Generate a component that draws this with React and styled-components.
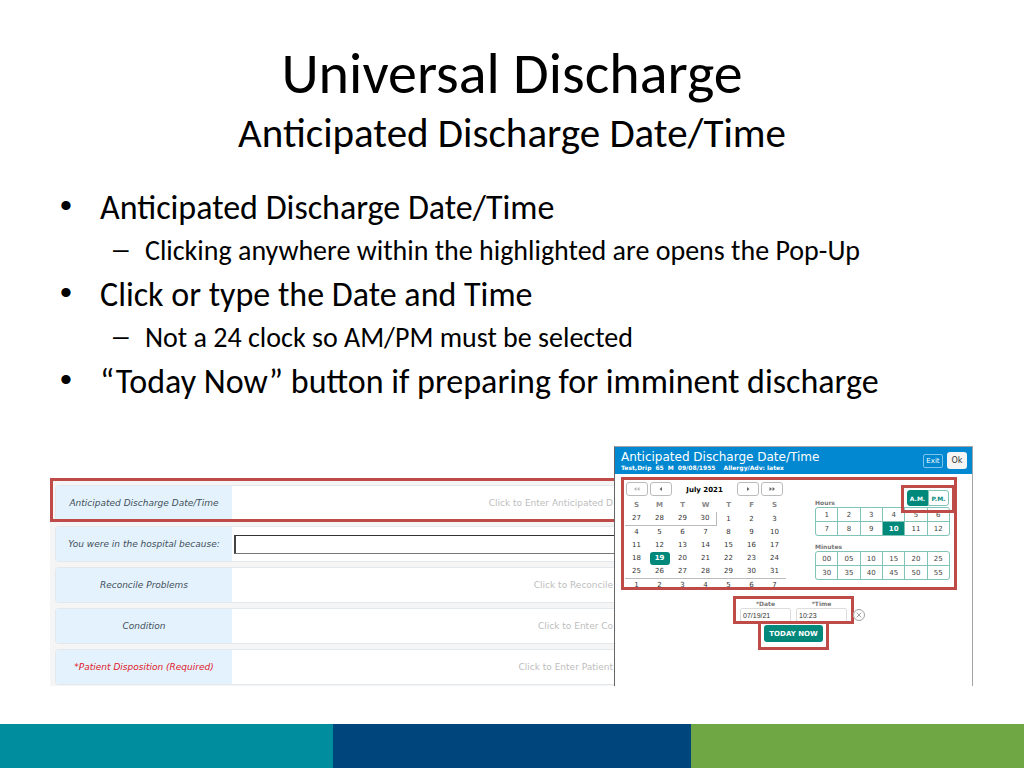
import React from "react";
import styled, { createGlobalStyle, css } from "styled-components";

const GlobalStyle = createGlobalStyle`
  * {
    box-sizing: border-box;
  }

  body {
    margin: 0;
    background: #fff;
    color: #000;
    font-family: Carlito, Lato, sans-serif;
  }

  button, input {
    font-family: inherit;
    margin: 0;
  }
`;

const bullets = [
  {
    text: "Anticipated Discharge Date/Time",
    sub: "Clicking anywhere within the highlighted are opens the Pop-Up",
  },
  {
    text: "Click or type the Date and Time",
    sub: "Not a 24 clock so AM/PM must be selected",
  },
  { text: "“Today Now” button if preparing for imminent discharge" },
];

const weekDays = ["S", "M", "T", "W", "T", "F", "S"];

const weeks = [
  [27, 28, 29, 30, 1, 2, 3],
  [4, 5, 6, 7, 8, 9, 10],
  [11, 12, 13, 14, 15, 16, 17],
  [18, 19, 20, 21, 22, 23, 24],
  [25, 26, 27, 28, 29, 30, 31],
  [1, 2, 3, 4, 5, 6, 7],
];

const hours = ["1", "2", "3", "4", "5", "6", "7", "8", "9", "10", "11", "12"];
const minutes = ["00", "05", "10", "15", "20", "25", "30", "35", "40", "45", "50", "55"];

const App = () => {
  return (
    <Slide>
      <GlobalStyle />
      <Heading>
        <Title>Universal Discharge</Title>
        <Subtitle>Anticipated Discharge Date/Time</Subtitle>
      </Heading>
      <Bullets>
        {bullets.map((b) => (
          <li key={b.text}>
            <Point>
              <Marker>•</Marker>
              {b.text}
            </Point>
            {b.sub && (
              <SubPoint>
                <Marker>–</Marker>
                {b.sub}
              </SubPoint>
            )}
          </li>
        ))}
      </Bullets>
      <Figure>
        <DischargeForm />
        <PopUp />
      </Figure>
      <Footer>
        <Band $color="#008e9e" />
        <Band $color="#00457c" />
        <Band $color="#6ea743" />
      </Footer>
    </Slide>
  );
};

const DischargeForm = () => (
  <Form>
    <FormRow $marked>
      <RowLabel>Anticipated Discharge Date/Time</RowLabel>
      <RowValue>Click to Enter Anticipated D</RowValue>
    </FormRow>
    <FormRow>
      <RowLabel as="label" htmlFor="reason">
        You were in the hospital because:
      </RowLabel>
      <RowInput id="reason" type="text" />
    </FormRow>
    <FormRow>
      <RowLabel>Reconcile Problems</RowLabel>
      <RowValue>Click to Reconcile</RowValue>
    </FormRow>
    <FormRow>
      <RowLabel>Condition</RowLabel>
      <RowValue>Click to Enter Co</RowValue>
    </FormRow>
    <FormRow>
      <RowLabel $required>*Patient Disposition (Required)</RowLabel>
      <RowValue>Click to Enter Patient</RowValue>
    </FormRow>
  </Form>
);

const PopUp = () => (
  <Dialog>
    <DialogHeader>
      <div>
        <DialogTitle>Anticipated Discharge Date/Time</DialogTitle>
        <Patient>
          <span>Test,Drip</span>
          <span>65</span>
          <span>M</span>
          <span>09/08/1955</span>
          <Allergy>Allergy/Adv: latex</Allergy>
        </Patient>
      </div>
      <HeaderButtons>
        <ExitButton type="button">Exit</ExitButton>
        <OkButton type="button">Ok</OkButton>
      </HeaderButtons>
    </DialogHeader>
    <PickerFrame>
      <div>
        <MonthBar>
          <NavButton type="button" aria-label="Previous year">
            <Chevron double left />
          </NavButton>
          <NavButton type="button" aria-label="Previous month">
            <Chevron left />
          </NavButton>
          <Month>July 2021</Month>
          <NavButton type="button" aria-label="Next month">
            <Chevron />
          </NavButton>
          <NavButton type="button" aria-label="Next year">
            <Chevron double />
          </NavButton>
        </MonthBar>
        <Calendar>
          <thead>
            <tr>
              {weekDays.map((d, i) => (
                <th key={i}>{d}</th>
              ))}
            </tr>
          </thead>
          <tbody>
            {weeks.map((week, w) => (
              <tr key={w}>
                {week.map((d, i) => (
                  <Day
                    key={i}
                    $under={w === 0 && i < 4}
                    $side={w === 0 && i === 3}
                    $over={w === 5}
                  >
                    <DayButton type="button" $selected={w === 3 && i === 1}>
                      {d}
                    </DayButton>
                  </Day>
                ))}
              </tr>
            ))}
          </tbody>
        </Calendar>
      </div>
      <Clock>
        <ClockLabel>Hours</ClockLabel>
        <ClockGrid>
          {hours.map((h) => (
            <ClockCell type="button" key={h} $selected={h === "10"}>
              {h}
            </ClockCell>
          ))}
        </ClockGrid>
        <ClockLabel>Minutes</ClockLabel>
        <ClockGrid>
          {minutes.map((m) => (
            <ClockCell type="button" key={m}>
              {m}
            </ClockCell>
          ))}
        </ClockGrid>
      </Clock>
      <MeridiemFrame>
        <Meridiem type="button" $selected>
          A.M.
        </Meridiem>
        <Meridiem type="button">P.M.</Meridiem>
      </MeridiemFrame>
    </PickerFrame>
    <Entry>
      <EntryFrame>
        <Field>
          <label htmlFor="date">*Date</label>
          <input id="date" type="text" defaultValue="07/19/21" />
        </Field>
        <Field>
          <label htmlFor="time">*Time</label>
          <input id="time" type="text" defaultValue="10:23" />
        </Field>
        <ClearButton type="button" aria-label="Clear">
          <svg width="12" height="12" viewBox="0 0 12 12" fill="none" stroke="#888">
            <circle cx="6" cy="6" r="5.5" strokeWidth="0.8" />
            <path d="M3.7 3.7 L8.3 8.3 M8.3 3.7 L3.7 8.3" strokeWidth="0.8" />
          </svg>
        </ClearButton>
      </EntryFrame>
      <TodayFrame>
        <TodayButton type="button">TODAY NOW</TodayButton>
      </TodayFrame>
    </Entry>
  </Dialog>
);

const Chevron = ({ double, left }) => (
  <svg width="8" height="6" viewBox="0 0 8 6" fill={double && left ? "#b5b5b5" : "#666"}>
    <g transform={left ? "matrix(-1 0 0 1 8 0)" : undefined}>
      {double ? (
        <path d="M1.5 1 L4 3 L1.5 5 Z M4.5 1 L7 3 L4.5 5 Z" />
      ) : (
        <path d="M3 1 L5.5 3 L3 5 Z" />
      )}
    </g>
  </svg>
);

const red = "#bf4b48";
const teal = "#00897b";

const Slide = styled.main`
  min-height: 100vh;
  display: flex;
  flex-direction: column;
`;

const Heading = styled.header`
  padding-top: 40px;
  text-align: center;
`;

const Title = styled.h1`
  margin: 0;
  font-size: 58px;
  font-weight: 400;
  line-height: 68px;
`;

const Subtitle = styled.h2`
  margin: 0;
  font-size: 41px;
  font-weight: 400;
  line-height: 50px;
`;

const Bullets = styled.ul`
  margin: 28px 0 0;
  padding: 0 60px;
  list-style: none;
`;

const Marker = styled.span`
  font-family: "Liberation Sans", sans-serif;
  line-height: 38px;
`;

const Point = styled.div`
  display: grid;
  grid-template-columns: 40px 1fr;
  font-size: 34px;
  line-height: 44px;
`;

const SubPoint = styled.div`
  display: grid;
  grid-template-columns: 32px 1fr;
  padding: 0 0 2px 53px;
  font-size: 28px;
  line-height: 41px;
`;

const Figure = styled.section`
  display: grid;
  grid-template-columns: 11fr 7fr;
  align-items: end;
  margin-top: auto;
  padding: 0 51px 38px 50px;
  font-family: "DejaVu Sans", sans-serif;
`;

const Form = styled.form`
  display: flex;
  flex-direction: column;
  gap: 5px;
  padding: 7px 0 1px 5px;
  overflow: hidden;
  background: #f5f5f5;
`;

const FormRow = styled.div`
  position: relative;
  display: flex;
  align-items: center;
  height: 36px;
  background: #fff;
  border: 1px solid #e3e8ec;
  border-right: 0;
  border-radius: 4px 0 0 4px;

  ${({ $marked }) =>
    $marked &&
    css`
      &::after {
        content: "";
        position: absolute;
        inset: -8px 0 -2px -6px;
        border: 3px solid ${red};
        border-right: 0;
      }
    `}
`;

const RowLabel = styled.span`
  display: flex;
  align-items: center;
  justify-content: center;
  flex: 0 0 176px;
  align-self: stretch;
  background: #e3f2fd;
  color: ${({ $required }) => ($required ? "#e0202c" : "#44505a")};
  font-size: 9px;
  font-style: italic;
  white-space: nowrap;
`;

const RowValue = styled.span`
  flex: 1;
  padding-right: 1px;
  color: #bdbdbd;
  font-size: 9px;
  text-align: right;
  white-space: nowrap;
`;

const RowInput = styled.input`
  flex: 1;
  min-width: 0;
  height: 19px;
  margin-left: 2px;
  border: 1px solid #777;
  border-left: 2px solid #444;
  border-top-color: #333;
  border-right: 0;
  border-radius: 0;
  background: #fff;
`;

const Dialog = styled.section`
  height: 240px;
  background: #fff;
  border: 1px solid #a5a5a5;
  border-left-color: #666;
  border-bottom: 0;
`;

const DialogHeader = styled.header`
  display: flex;
  align-items: center;
  justify-content: space-between;
  height: 27px;
  padding: 0 5px 0 6px;
  background: #0288d1;
  color: #fff;
`;

const DialogTitle = styled.h3`
  margin: 0;
  font-size: 12px;
  font-weight: 400;
  line-height: 14px;
`;

const Patient = styled.div`
  display: flex;
  gap: 4px;
  font-size: 6px;
  font-weight: 700;
  line-height: 8px;
`;

const Allergy = styled.span`
  margin-left: 4px;
`;

const HeaderButtons = styled.div`
  display: flex;
  gap: 4px;
  align-items: center;
`;

const ExitButton = styled.button`
  width: 20px;
  height: 14px;
  padding: 0;
  border: 1px solid #7cc4ee;
  border-radius: 2px;
  background: transparent;
  color: #fff;
  font-size: 7px;
`;

const OkButton = styled.button`
  width: 20px;
  height: 17px;
  padding: 0;
  border: 0;
  border-radius: 3px;
  background: #f5f5f5;
  color: #333;
  font-size: 8px;
`;

const PickerFrame = styled.div`
  position: relative;
  display: flex;
  justify-content: space-between;
  height: 113px;
  margin: 3px 15px 0 6px;
  padding: 2px 4px 0 1px;
  border: 3px solid ${red};
`;

const MonthBar = styled.div`
  display: flex;
  gap: 2px;
  padding: 0 3px 0 1px;
`;

const NavButton = styled.button`
  display: flex;
  align-items: center;
  justify-content: center;
  width: 22px;
  height: 14px;
  padding: 0;
  border: 1px solid #bbb;
  border-radius: 3px;
  background: #fff;
`;

const Month = styled.div`
  flex: 1;
  font-size: 7px;
  font-weight: 700;
  line-height: 16px;
  text-align: center;
`;

const Calendar = styled.table`
  width: 161px;
  border-collapse: separate;
  border-spacing: 0;
  table-layout: fixed;
  font-size: 7px;

  th {
    height: 14px;
    padding: 0;
    color: #888;
  }
`;

const Day = styled.td`
  height: 13px;
  padding: 0;
  line-height: 12px;
  text-align: center;
  border: 0 solid #bbb;
  border-bottom-width: ${({ $under }) => ($under ? 1 : 0)}px;
  border-right-width: ${({ $side }) => ($side ? 1 : 0)}px;
  border-top-width: ${({ $over }) => ($over ? 1 : 0)}px;
`;

const DayButton = styled.button`
  width: 20px;
  height: 13px;
  padding: 0;
  border: 0;
  border-radius: 3px;
  background: ${({ $selected }) => ($selected ? teal : "transparent")};
  color: ${({ $selected }) => ($selected ? "#fff" : "#333")};
  font-size: 7px;
  font-weight: ${({ $selected }) => ($selected ? 700 : 400)};
  line-height: 13px;
  vertical-align: top;
`;

const Clock = styled.div`
  width: 135px;
  padding-top: 16px;
`;

const ClockLabel = styled.div`
  color: #777;
  font-size: 6px;
  font-weight: 700;
  line-height: 9px;
`;

const ClockGrid = styled.div`
  display: grid;
  grid-template-columns: repeat(6, 1fr);
  gap: 1px;
  margin-bottom: 6px;
  border: 1px solid #80c4b7;
  border-radius: 3px;
  background: #80c4b7;
  overflow: hidden;
`;

const ClockCell = styled.button`
  height: 13px;
  padding: 0;
  border: 0;
  background: ${({ $selected }) => ($selected ? teal : "#fff")};
  color: ${({ $selected }) => ($selected ? "#fff" : "#444")};
  font-size: 7px;
  font-weight: ${({ $selected }) => ($selected ? 700 : 400)};
`;

const MeridiemFrame = styled.div`
  position: absolute;
  top: 5px;
  right: -1px;
  display: flex;
  height: 28px;
  padding: 2px 3px 7px 3px;
  border: 3px solid ${red};
`;

const Meridiem = styled.button`
  width: 21px;
  height: 16px;
  padding: 0;
  border: 1px solid ${({ $selected }) => ($selected ? teal : "#80c4b7")};
  border-radius: ${({ $selected }) => ($selected ? "3px 0 0 3px" : "0 3px 3px 0")};
  background: ${({ $selected }) => ($selected ? teal : "#fff")};
  color: ${({ $selected }) => ($selected ? "#fff" : teal)};
  font-size: 6px;
  font-weight: 700;
`;

const Entry = styled.div`
  display: flex;
  flex-direction: column;
  align-items: center;
  margin-top: 6px;
`;

const EntryFrame = styled.div`
  position: relative;
  display: flex;
  gap: 5px;
  height: 28px;
  padding: 0 4px;
  border: 3px solid ${red};
`;

const Field = styled.div`
  display: flex;
  flex-direction: column;
  overflow: hidden;

  label {
    color: #777;
    font-size: 6px;
    font-weight: 700;
    line-height: 9px;
    text-align: center;
  }

  input {
    width: 51px;
    height: 14px;
    flex: none;
    padding: 0 2px;
    border: 1px solid #ddd;
    border-radius: 2px;
    background: #fff;
    color: #333;
    font-family: "Liberation Sans", sans-serif;
    font-size: 7px;
  }
`;

const ClearButton = styled.button`
  position: absolute;
  top: 10px;
  right: -14px;
  display: flex;
  padding: 0;
  border: 0;
  border-radius: 50%;
  background: #fff;
`;

const TodayFrame = styled.div`
  margin-top: -3px;
  padding: 1px 3px 5px;
  border: 3px solid ${red};
`;

const TodayButton = styled.button`
  display: block;
  width: 59px;
  height: 17px;
  padding: 0;
  border: 0;
  border-radius: 3px;
  background: ${teal};
  color: #fff;
  font-size: 7px;
  font-weight: 700;
`;

const Footer = styled.footer`
  display: grid;
  grid-template-columns: 13fr 14fr 13fr;
  height: 44px;
`;

const Band = styled.div`
  background: ${({ $color }) => $color};
`;

export default App;
